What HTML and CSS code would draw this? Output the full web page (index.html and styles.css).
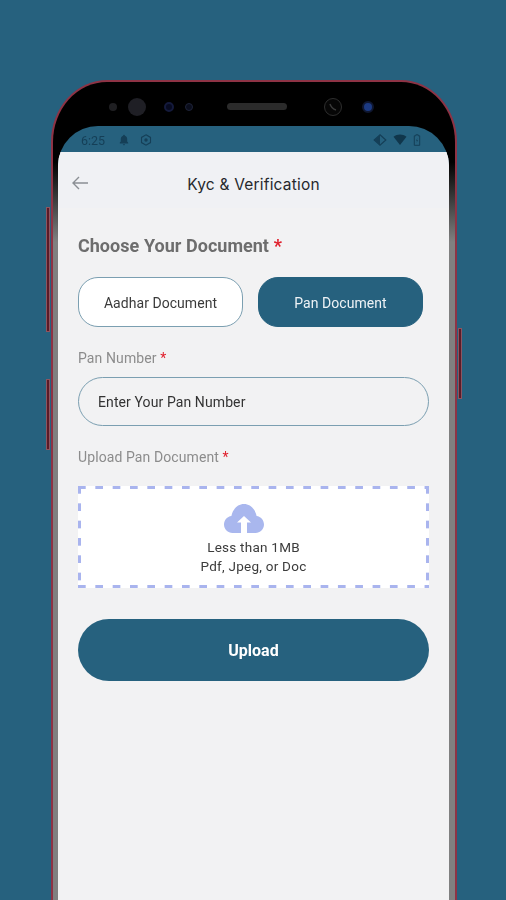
FILE: index.html
```html
<!DOCTYPE html>
<html lang="en">
<head>
<meta charset="utf-8">
<title>Kyc &amp; Verification</title>
<link rel="stylesheet" href="styles.css">
</head>
<body>
<div class="stage">
  <div class="phone">
    <span class="side-btn left-a"></span>
    <span class="side-btn left-b"></span>
    <span class="side-btn right-a"></span>
    <div class="bezel">
      <div class="sensors">
        <span class="dot d1"></span>
        <span class="dot d2"></span>
        <span class="dot d3"></span>
        <span class="dot d4"></span>
        <span class="speaker"></span>
        <span class="dot d5"><svg class="d5-mark" viewBox="0 0 16 16"><path d="M5 5c1 3 3 5 6 6" fill="none" stroke="#3a3a3a" stroke-width="1.500"/></svg></span>
        <span class="dot d6"></span>
      </div>
      <div class="screen">
        <div class="status">
          <div class="status-group">
            <span class="time">6:25</span>
            <svg class="st-icon" viewBox="0 0 12 12"><path d="M6 .8c.6 0 .9.4.9 1 1.500.4 2.300 1.700 2.300 3.200v2.600l1 1.200v.6H1.800V8.600l1-1.200V5c0-1.500.8-2.800 2.300-3.200 0-.6.300-1 .9-1zM4.900 10.200h2.200c0 .7-.5 1.100-1.100 1.100s-1.100-.4-1.100-1.100z" fill="#153f57"/></svg>
            <svg class="st-icon gear" viewBox="0 0 12 12"><path d="M6 .8l4.500 2.600v5.200L6 11.200 1.500 8.600V3.400z" fill="none" stroke="#153f57" stroke-width="1.100"/><circle cx="6" cy="6" r="1.700" fill="#153f57"/></svg>
          </div>
          <div class="status-group right">
            <svg class="st-icon wide" viewBox="0 0 14 12"><path d="M7 .8L12.800 6 7 11.200 1.200 6z" fill="none" stroke="#153f57" stroke-width="1.200"/><path d="M7 1v10L1.500 6z" fill="#153f57"/></svg>
            <svg class="st-icon wide" viewBox="0 0 14 12"><path d="M.5 2.800C4.300-.2 9.700-.2 13.500 2.800L7 11z" fill="#10364b"/></svg>
            <svg class="st-icon narrow" viewBox="0 0 8 12"><path d="M2.800.8h2.400v1h1.500v9.500H1.300V1.800h1.500z" fill="none" stroke="#153f57" stroke-width="1"/><path d="M4.400 4L3 6.800h1L3.600 9 5 6h-1z" fill="#153f57"/></svg>
          </div>
        </div>
        <div class="app">
          <header class="topbar">
            <svg class="back" viewBox="0 0 18 14"><path d="M17 7H2M8 1L2 7l6 6" fill="none" stroke="#8b8f94" stroke-width="1.400"/></svg>
            <h1 class="title">Kyc &amp; Verification</h1>
          </header>
          <main class="content">
            <h2 class="heading">Choose Your Document <span class="req">*</span></h2>
            <div class="choices">
              <button class="choice">Aadhar Document</button>
              <button class="choice active">Pan Document</button>
            </div>
            <p class="label first">Pan Number <span class="req">*</span></p>
            <div class="field">Enter Your Pan Number</div>
            <p class="label second">Upload Pan Document <span class="req">*</span></p>
            <div class="dropzone">
              <svg class="cloud" viewBox="0 0 40 30"><path d="M8.500 30C3.800 30 0 26.200 0 21.500 0 17.200 3.200 13.600 7.400 13 8.800 6 13.800 1 20 1s11.200 5 12.600 12C36.800 13.600 40 17.200 40 21.500 40 26.200 36.200 30 31.500 30z" fill="#a9b7ee"/><path d="M20 13l7 6.500h-4V30h-6V19.500h-4z" fill="#fff"/></svg>
              <p class="hint">Less than 1MB</p>
              <p class="hint">Pdf, Jpeg, or Doc</p>
            </div>
            <button class="upload">Upload</button>
          </main>
        </div>
      </div>
    </div>
  </div>
</div>
</body>
</html>
```

FILE: styles.css
```css
* { box-sizing: border-box; }
html, body { margin: 0; padding: 0; }
body { background: #26617e; font-family: Roboto, "Liberation Sans", sans-serif; }
.stage { width: 506px; height: 900px; overflow: hidden; padding: 80px 0 0 51px; filter: blur(0.4px); }

.phone { position: relative; width: 406px; height: 900px; }
.side-btn { position: absolute; width: 4px; background: #5b1a28; border: 1px solid #8d5560; }
.left-a { left: -5px; top: 127px; height: 125px; }
.left-b { left: -5px; top: 299px; height: 71px; }
.right-a { right: -5px; top: 248px; height: 71px; }

.bezel {
  height: 900px; padding: 0 6px 0 5px;
  background: linear-gradient(180deg, #000 0, #000 80px, #808080 160px);
  border: 2px solid #8e3345; border-bottom: 0;
  border-radius: 56px 56px 0 0 / 62px 62px 0 0;
}
.sensors { position: relative; height: 44px; }
.dot { position: absolute; border-radius: 50%; }
.d1 { left: 51px; top: 21px; width: 8px; height: 8px; background: #1f1f22; }
.d2 { left: 70px; top: 16px; width: 18px; height: 18px; background: #1f1f25; }
.d3 { left: 106px; top: 20px; width: 10px; height: 10px; background: #070a20; border: 2px solid #141a3c; }
.d4 { left: 127px; top: 21px; width: 8px; height: 8px; background: #0a0d1c; border: 1px solid #1e2338; }
.d5 { left: 266px; top: 16px; width: 18px; height: 18px; background: #060606; border: 1px solid #2e2e2e; }
.d5-mark { display: block; width: 16px; height: 16px; }
.d6 { left: 304px; top: 19px; width: 12px; height: 12px; background: #1c3a82; border: 2px solid #0f1730; }
.speaker { position: absolute; left: 169px; top: 21px; width: 60px; height: 7px; border-radius: 4px; background: #2b2b2b; }

.screen { height: 860px; border-radius: 40px 40px 0 0; overflow: hidden; background: #26617e; }
.status { height: 26px; padding: 2px 28px 0 23px; display: flex; justify-content: space-between; align-items: center; }
.status-group { display: flex; align-items: center; gap: 10px; }
.status-group.right { gap: 6px; }
.time { font-size: 12.500px; color: #153f57; width: 27px; }
.st-icon { width: 12px; height: 12px; display: block; }
.st-icon.wide { width: 14px; }
.st-icon.narrow { width: 8px; }

.app { height: 834px; background: #f2f2f3; }
.topbar { height: 56px; background: #f0f1f4; display: flex; align-items: center; justify-content: center; position: relative; padding-top: 8px; }
.back { position: absolute; left: 13px; top: 24px; width: 18px; height: 14px; }
.title { margin: 0; font-family: Inter, "Noto Sans", sans-serif; font-size: 15.500px; font-weight: 400; color: #26282c; letter-spacing: 0.2px; }

.content { padding: 0 20px; }
.heading { margin: 27px 0 0; font-size: 18px; line-height: 21px; font-weight: 700; color: #6d6d6d; word-spacing: 0.3px; }
.req { color: #e0202c; }
.choices { display: flex; gap: 15px; margin-top: 21px; padding-right: 6px; }
.choice {
  width: 165px; height: 50px; padding: 2px 0 0; font: 400 14px Roboto, sans-serif; letter-spacing: 0.05px;
  border: 1px solid #7b9fb1; border-radius: 20px; background: #fff; color: #3a3a3a;
}
.choice.active { background: #26617e; border-color: #26617e; color: #eef3f6; }
.label { margin: 0; font-size: 14px; line-height: 18px; color: #8c8c8c; letter-spacing: 0.1px; }
.label.first { margin-top: 22px; }
.label.second { margin-top: 22px; }
.field {
  height: 49px; margin-top: 10px; padding-left: 19px; display: flex; align-items: center;
  border: 1px solid #7b9fb1; border-radius: 25px; font-size: 14px; letter-spacing: 0.1px; color: #333;
}
.dropzone {
  height: 102px; margin-top: 20px; padding-top: 17px; text-align: center;
  background-color: #fff;
  background-image:
    linear-gradient(90deg, #a9b4ee 8px, transparent 8px),
    linear-gradient(90deg, #a9b4ee 8px, transparent 8px),
    linear-gradient(180deg, #a9b4ee 8px, transparent 8px),
    linear-gradient(180deg, #a9b4ee 8px, transparent 8px);
  background-size: 17.330px 3px, 17.330px 3px, 3px 17.330px, 3px 17.330px;
  background-position: 0 0, 0 100%, 0 0, 100% 0;
  background-repeat: repeat-x, repeat-x, repeat-y, repeat-y;
}
.cloud { display: block; width: 40px; height: 30px; margin: 0 0 5px 146px; }
.hint { margin: 0; font-size: 13.500px; line-height: 19px; color: #3c3c3c; letter-spacing: 0.25px; }
.upload {
  display: block; width: 100%; height: 62px; margin-top: 31px; border: 0; border-radius: 31px;
  background: #26617e; color: #fff; font: 700 16px Roboto, sans-serif;
}
```
